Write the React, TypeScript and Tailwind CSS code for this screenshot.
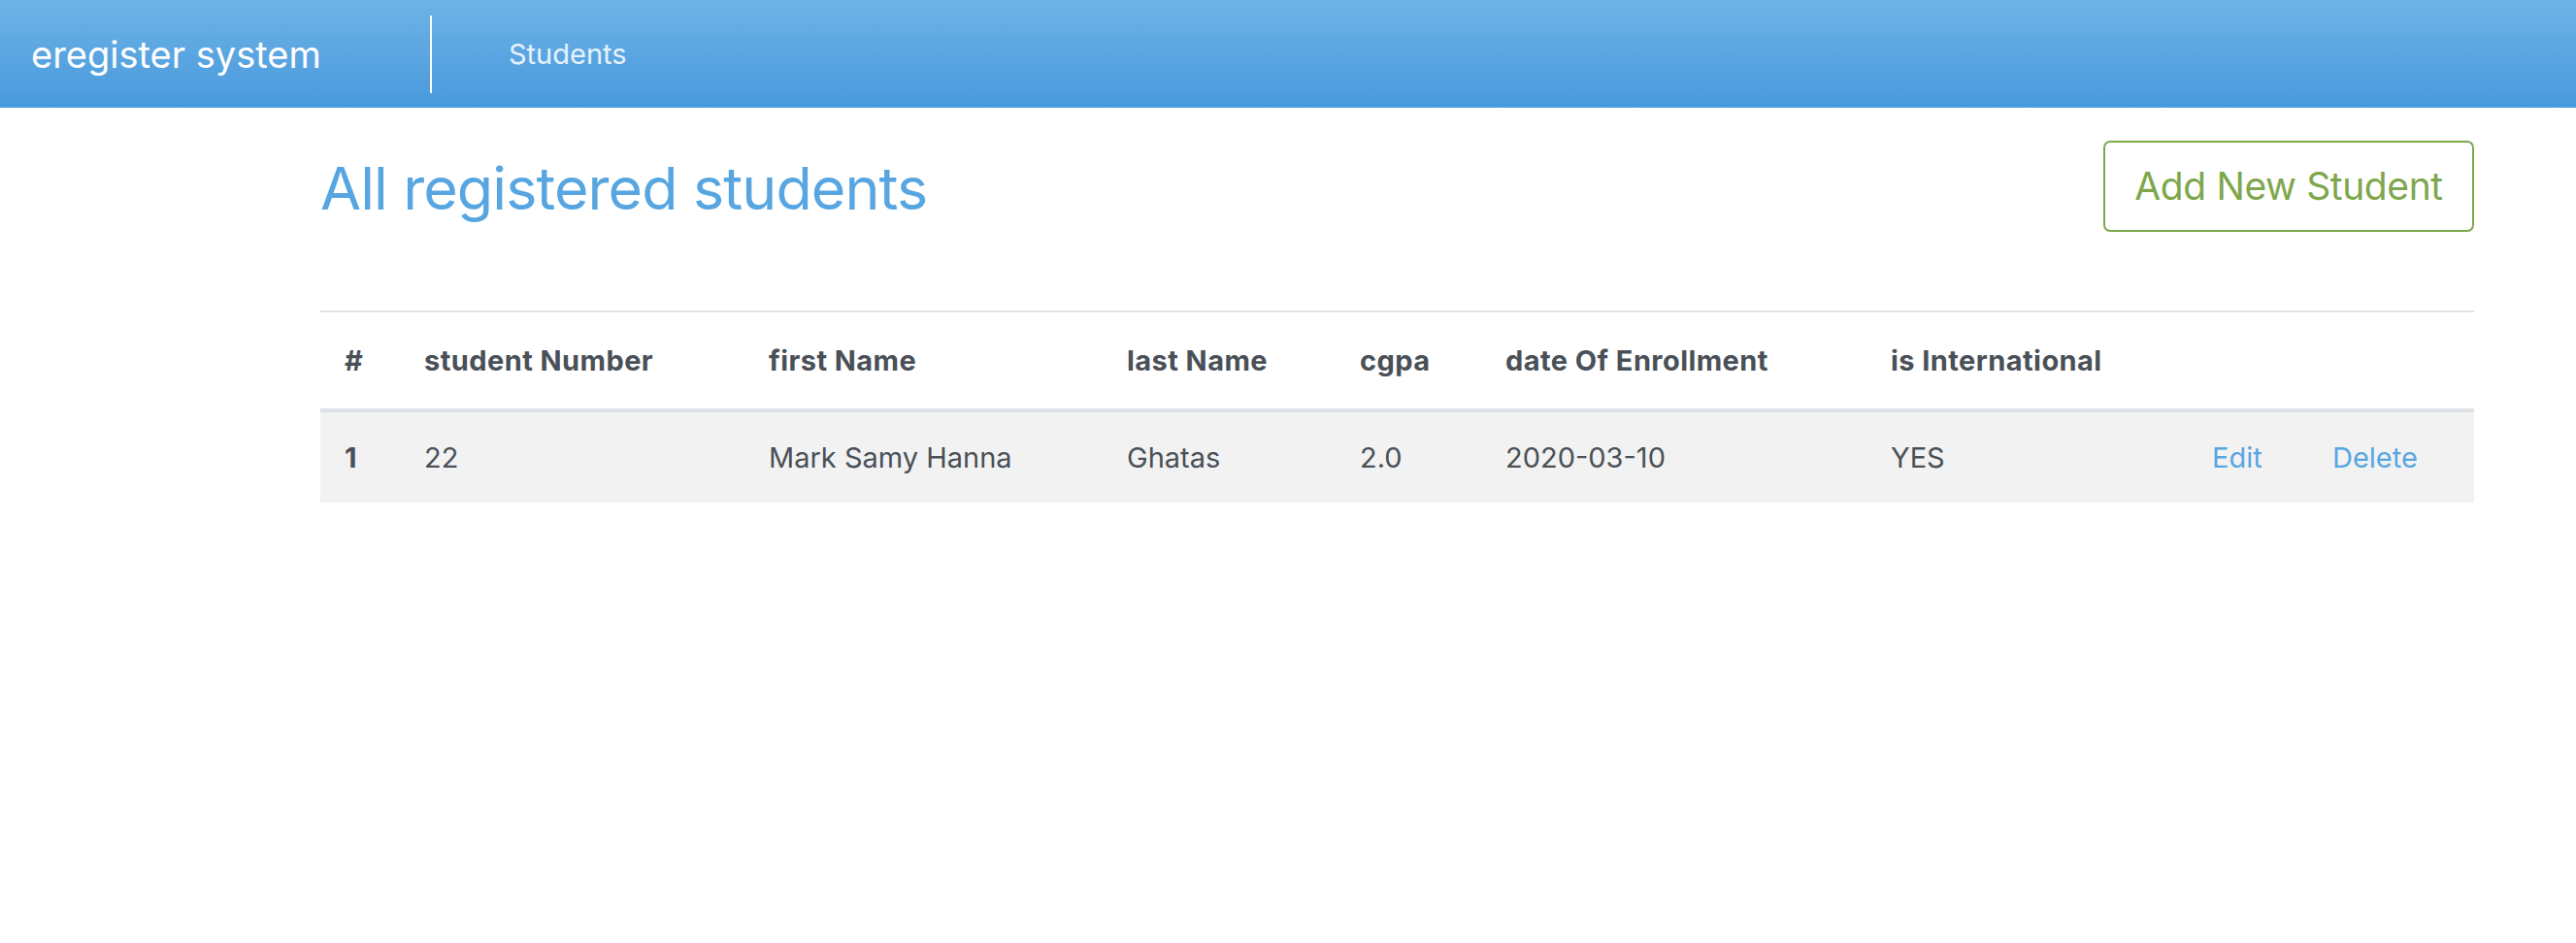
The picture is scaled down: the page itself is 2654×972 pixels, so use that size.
const students = [
  {
    id: 1,
    studentNumber: "22",
    firstName: "Mark Samy Hanna",
    lastName: "Ghatas",
    cgpa: "2.0",
    dateOfEnrollment: "2020-03-10",
    isInternational: "YES",
  },
]

const headers = [
  "#",
  "student Number",
  "first Name",
  "last Name",
  "cgpa",
  "date Of Enrollment",
  "is International",
  "",
  "",
]

export default function App() {
  return (
    <div className="min-h-screen bg-white font-[Inter,'Liberation_Sans',sans-serif] text-[#495057]">
      <nav className="flex h-[111px] items-center bg-gradient-to-b from-[#6db3e7] to-[#4899dc]">
        <div className="w-[443px] pl-[32px] text-[38px] leading-none text-white">
          eregister system
        </div>
        <div className="h-[80px] w-[2px] bg-white" />
        <a className="ml-[79px] text-[29px] text-white/85">Students</a>
      </nav>

      <main className="ml-[330px] w-[2219px]">
        <div className="flex items-center justify-between pt-[34px]">
          <h1 className="pt-[4px] text-[61px] leading-none font-normal tracking-[-0.015em] text-[#58a6e1]">
            All registered students
          </h1>
          <button className="h-[94px] w-[382px] rounded-[7px] border-2 border-[#7ea74d] text-[39px] tracking-[-0.01em] text-[#7ea74d]">
            Add New Student
          </button>
        </div>

        <table className="mt-[81px] w-full table-fixed border-t-2 border-[#dee2e6] text-left text-[29px]">
          <colgroup>
            <col className="w-[82px]" />
            <col className="w-[355px]" />
            <col className="w-[369px]" />
            <col className="w-[240px]" />
            <col className="w-[150px]" />
            <col className="w-[397px]" />
            <col className="w-[331px]" />
            <col className="w-[124px]" />
            <col />
          </colgroup>
          <thead>
            <tr className="h-[102px] border-b-4 border-[#dee2e6]">
              {headers.map((h, i) => (
                <th
                  key={i}
                  className="px-[25px] font-bold tracking-[0.015em] whitespace-nowrap"
                >
                  {h}
                </th>
              ))}
            </tr>
          </thead>
          <tbody>
            {students.map((s) => (
              <tr key={s.id} className="h-[95px] bg-[#f2f2f2]">
                <td className="px-[25px] font-bold">{s.id}</td>
                <td className="px-[25px]">{s.studentNumber}</td>
                <td className="px-[25px] whitespace-nowrap">{s.firstName}</td>
                <td className="px-[25px]">{s.lastName}</td>
                <td className="px-[25px]">{s.cgpa}</td>
                <td className="px-[25px]">{s.dateOfEnrollment}</td>
                <td className="px-[25px]">{s.isInternational}</td>
                <td className="px-[25px]">
                  <a className="text-[#58a6e1]">Edit</a>
                </td>
                <td className="px-[25px]">
                  <a className="text-[#58a6e1]">Delete</a>
                </td>
              </tr>
            ))}
          </tbody>
        </table>
      </main>
    </div>
  )
}
